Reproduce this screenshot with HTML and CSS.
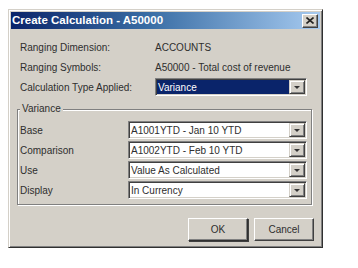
FILE: index.html
```html
<!DOCTYPE html>
<html>
<head>
<meta charset="utf-8">
<link rel="stylesheet" href="styles.css">
</head>
<body>
<div class="page">
  <div class="window">
    <div class="titlebar">
      <span class="title">Create Calculation - A50000</span>
      <span class="close"><svg width="8" height="7" viewBox="0 0 8 7"><path d="M0.5 0.5 L7.5 6.5 M7.5 0.5 L0.5 6.5" stroke="#222" stroke-width="1.6" fill="none"/></svg></span>
    </div>
    <div class="body">
      <div class="info">
        <div class="row"><span class="label">Ranging Dimension:</span><span class="value">ACCOUNTS</span></div>
        <div class="row"><span class="label">Ranging Symbols:</span><span class="value">A50000 - Total cost of revenue</span></div>
        <div class="row"><span class="label">Calculation Type Applied:</span>
          <div class="combo combo-top selected"><span class="combo-text">Variance</span><span class="combo-btn"></span></div>
        </div>
      </div>
      <fieldset class="group">
        <legend class="legend">Variance</legend>
        <div class="grid">
          <span class="glabel">Base</span>
          <div class="combo"><span class="combo-text">A1001YTD - Jan 10 YTD</span><span class="combo-btn"></span></div>
          <span class="glabel">Comparison</span>
          <div class="combo"><span class="combo-text">A1002YTD - Feb 10 YTD</span><span class="combo-btn"></span></div>
          <span class="glabel">Use</span>
          <div class="combo"><span class="combo-text">Value As Calculated</span><span class="combo-btn"></span></div>
          <span class="glabel">Display</span>
          <div class="combo"><span class="combo-text">In Currency</span><span class="combo-btn"></span></div>
        </div>
      </fieldset>
      <div class="buttons">
        <button class="btn btn-default">OK</button>
        <button class="btn">Cancel</button>
      </div>
    </div>
  </div>
</div>
</body>
</html>
```
FILE: styles.css
```css
html, body {
  margin: 0;
  padding: 0;
  background: #fff;
}
body {
  font-family: "Liberation Sans", Arial, sans-serif;
  font-size: 10px;
  color: #2e2e2e;
}
.page {
  padding: 9px 0 0 8px;
}
.window {
  width: 309px;
  background: #d4d0c8;
  border: 1px solid;
  border-color: #d4d0c8 #303030 #303030 #d4d0c8;
  padding: 2px;
  box-shadow: inset 1px 1px 0 #fff, inset -1px -1px 0 #808080;
}
.titlebar {
  height: 17px;
  display: flex;
  align-items: center;
  justify-content: space-between;
  padding: 0 2px 0 1px;
  background: linear-gradient(to right, #0a246a 0%, #3a6ea5 45%, #a6caf0 100%);
}
.title {
  color: #fff;
  font-weight: bold;
  font-size: 11.5px;
  line-height: 13px;
}
.close {
  width: 14px;
  height: 12px;
  display: flex;
  align-items: center;
  justify-content: center;
  background: #d4d0c8;
  border: 1px solid;
  border-color: #fff #404040 #404040 #fff;
  box-shadow: inset -1px -1px 0 #808080;
}
.body {
  padding: 8px 6px 4px 6px;
}
.info {
  padding-left: 3px;
  display: flex;
  flex-direction: column;
}
.row {
  height: 20px;
  display: flex;
  align-items: center;
}
.label {
  width: 135px;
  flex: none;
}
.combo {
  height: 18px;
  box-sizing: border-box;
  display: flex;
  align-items: stretch;
  background: #fff;
  border: 1px solid;
  border-color: #808080 #fff #fff #808080;
  box-shadow: inset 1px 1px 0 #404040, inset -1px -1px 0 #d4d0c8;
  padding: 1px;
}
.combo-top {
  width: 152px;
}
.combo-text {
  flex: 1;
  display: flex;
  align-items: center;
  padding-left: 1px;
  white-space: nowrap;
  overflow: hidden;
}
.selected .combo-text {
  background: #0a246a;
  color: #fff;
}
.combo-btn {
  width: 16px;
  flex: none;
  box-sizing: border-box;
  background: #d4d0c8;
  border: 1px solid;
  border-color: #d4d0c8 #404040 #404040 #d4d0c8;
  box-shadow: inset 1px 1px 0 #fff, inset -1px -1px 0 #808080;
  display: flex;
  align-items: center;
  justify-content: center;
}
.combo-btn::after {
  content: "";
  width: 0;
  height: 0;
  border-top: 3px solid #333;
  border-left: 3px solid transparent;
  border-right: 3px solid transparent;
}
.group {
  margin: 6px 2px 0 0;
  padding: 6px 4px 5px 2px;
  min-width: 0;
  border: 1px solid #808080;
  box-shadow: inset 1px 1px 0 #fff, 1px 1px 0 #fff;
}
.legend {
  padding: 0 2px;
  font-size: 10px;
  line-height: 12px;
  background: #d4d0c8;
}
.grid {
  display: grid;
  grid-template-columns: 108px 179px;
  grid-auto-rows: 18px;
  row-gap: 2px;
  align-items: center;
}
.glabel {
  white-space: nowrap;
}
.buttons {
  margin-top: 13px;
  display: flex;
  justify-content: flex-end;
  gap: 6px;
}
.btn {
  width: 60px;
  height: 23px;
  margin: 0;
  padding: 0;
  font-family: "Liberation Sans", Arial, sans-serif;
  font-size: 10px;
  color: #2e2e2e;
  background: #d4d0c8;
  border: 1px solid;
  border-color: #fff #404040 #404040 #fff;
  box-shadow: inset -1px -1px 0 #808080;
}
.btn-default {
  border-color: #fff #303030 #303030 #fff;
  box-shadow: inset -1px -1px 0 #808080, 1px 1px 0 #404040;
}
```
